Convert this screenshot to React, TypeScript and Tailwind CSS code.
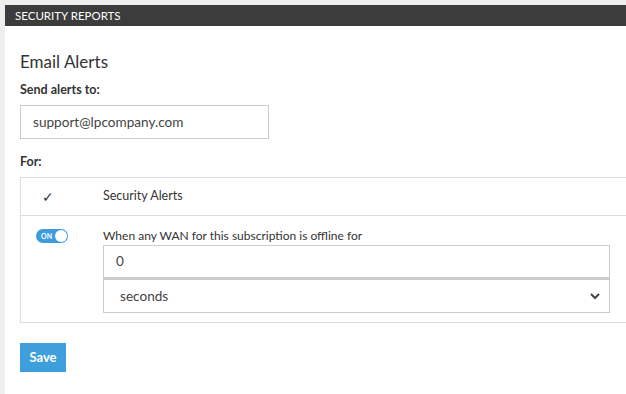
import React from "react";

export default function App() {
  const font = { fontFamily: "Lato, 'Open Sans', sans-serif" };
  return (
    <div className="w-[626px] h-[394px] bg-[#eeeeee] pt-[5px] pl-[5px] overflow-hidden" style={font}>
      <div className="bg-white h-full">
        <div className="h-[21px] bg-[#3c3c3c] text-white text-[11.5px] leading-[21px] pl-[10px]">
          SECURITY REPORTS
        </div>
        <div className="pl-[15px]">
          <h2 className="text-[17px] text-[#333] pt-[26px] leading-[20px]">Email Alerts</h2>
          <div className="text-[12.5px] font-bold text-[#333] mt-[10px] leading-[16px]">Send alerts to:</div>
          <div className="mt-[7px] w-[249px] h-[34px] border border-[#cccccc] flex items-center pl-[12px] text-[13.6px] text-[#444]">
            support@lpcompany.com
          </div>
          <div className="text-[12.5px] font-bold text-[#333] mt-[15px] leading-[16px]">For:</div>
          <div className="mt-[7px] w-[640px] border border-[#dddddd] text-[12.5px] text-[#333]">
            <div className="flex h-[38px] items-center border-b border-[#dddddd]">
              <div className="w-[82px] pl-[21px] text-[14px]">✓</div>
              <div>Security Alerts</div>
            </div>
            <div className="flex pt-[12px] pb-[9px]">
              <div className="w-[82px] pl-[15px] pt-[1px]">
                <div className="w-[32px] h-[14px] rounded-full bg-[#3d9be0] flex items-center justify-between pl-[5px] pr-[1px]">
                  <span className="text-white text-[7px] font-bold leading-none">ON</span>
                  <span className="w-[12px] h-[12px] rounded-full bg-white"></span>
                </div>
              </div>
              <div className="flex flex-col">
                <div className="leading-[15px] text-[12px]">When any WAN for this subscription is offline for</div>
                <div className="mt-[2px] w-[507px] h-[34px] border border-[#cccccc] border-b-[2px] flex items-center pl-[12px] text-[13.6px] text-[#444]">
                  0
                </div>
                <div className="w-[507px] h-[34px] border border-[#cccccc] flex items-center justify-between pl-[16px] pr-[8px] text-[13.6px] text-[#444]">
                  <span>seconds</span>
                  <svg width="12" height="8" viewBox="0 0 12 8">
                    <path d="M2 2 L6 6 L10 2" stroke="#444" strokeWidth="2" fill="none" />
                  </svg>
                </div>
              </div>
            </div>
          </div>
          <button className="mt-[20px] w-[46px] h-[29px] bg-[#3f9fdc] text-white text-[13px] font-bold">Save</button>
        </div>
      </div>
    </div>
  );
}
